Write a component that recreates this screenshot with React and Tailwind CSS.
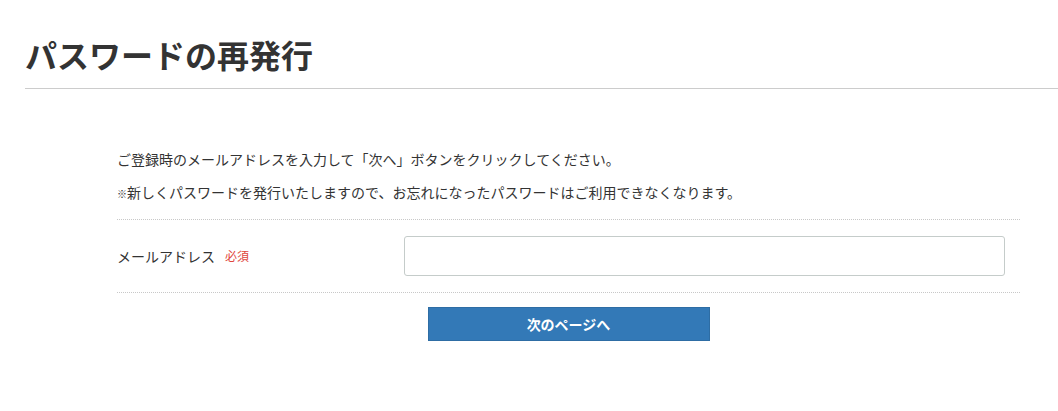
import React from "react";

const font = {
  fontFamily: '"Noto Sans CJK JP", "Noto Sans", sans-serif',
};

export default function App() {
  return (
    <div className="w-[1058px] h-[411px] bg-white text-[#333] overflow-hidden" style={font}>
      <div className="pl-[25px]">
        <h1 className="pt-[30px] pb-[10px] text-[32px] leading-[48px] font-bold border-b border-[#cccccc]">
          パスワードの再発行
        </h1>
      </div>

      <div className="ml-[117px] w-[903px] pt-[60px]">
        <p className="text-[14px] leading-[20px]">
          ご登録時のメールアドレスを入力して「次へ」ボタンをクリックしてください。
        </p>
        <p className="mt-[13px] text-[14px] leading-[20px] pb-[15px] border-b border-dotted border-[#c8c8c8]">
          <span className="text-[10px]">※</span>
          新しくパスワードを発行いたしますので、お忘れになったパスワードはご利用できなくなります。
        </p>

        <div className="flex items-center py-[16px] border-b border-dotted border-[#c8c8c8]">
          <div className="w-[287px] flex items-center text-[14px]">
            <span>メールアドレス</span>
            <span className="ml-[10px] text-[12px] text-[#e0463d]">必須</span>
          </div>
          <input
            type="text"
            className="w-[601px] h-[40px] border border-[#c5ccca] rounded-[3px] bg-white outline-none px-2"
          />
        </div>

        <div className="flex justify-center pt-[14px]">
          <button className="w-[282px] h-[34px] bg-[#3379b7] border border-[#2e6da4] text-white text-[14px] font-bold">
            次のページへ
          </button>
        </div>
      </div>
    </div>
  );
}
